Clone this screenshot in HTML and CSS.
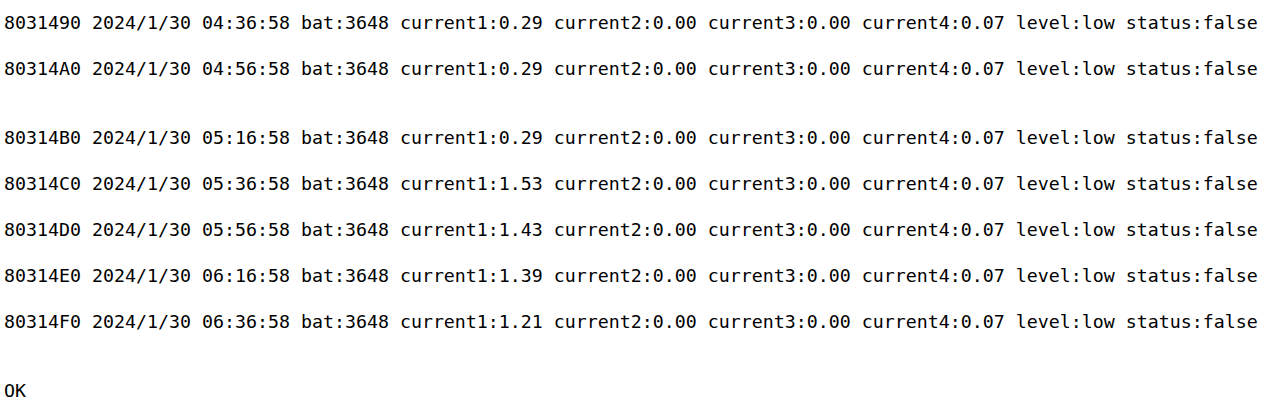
FILE: index.html
```html
<!DOCTYPE html>
<html>
<head>
<meta charset="utf-8">
<link rel="stylesheet" href="styles.css">
</head>
<body>
<pre class="log">8031490 2024/1/30 04:36:58 bat:3648 current1:0.29 current2:0.00 current3:0.00 current4:0.07 level:low status:false

80314A0 2024/1/30 04:56:58 bat:3648 current1:0.29 current2:0.00 current3:0.00 current4:0.07 level:low status:false


80314B0 2024/1/30 05:16:58 bat:3648 current1:0.29 current2:0.00 current3:0.00 current4:0.07 level:low status:false

80314C0 2024/1/30 05:36:58 bat:3648 current1:1.53 current2:0.00 current3:0.00 current4:0.07 level:low status:false

80314D0 2024/1/30 05:56:58 bat:3648 current1:1.43 current2:0.00 current3:0.00 current4:0.07 level:low status:false

80314E0 2024/1/30 06:16:58 bat:3648 current1:1.39 current2:0.00 current3:0.00 current4:0.07 level:low status:false

80314F0 2024/1/30 06:36:58 bat:3648 current1:1.21 current2:0.00 current3:0.00 current4:0.07 level:low status:false


OK</pre>
</body>
</html>
```
FILE: styles.css
```css
html, body {
  margin: 0;
  padding: 0;
  background: #ffffff;
}
.log {
  margin: 0;
  padding: 11px 0 0 4px;
  font-family: "DejaVu Sans Mono", "Liberation Mono", monospace;
  font-size: 18.27px;
  line-height: 23px;
  color: #000000;
  white-space: pre;
}
```
